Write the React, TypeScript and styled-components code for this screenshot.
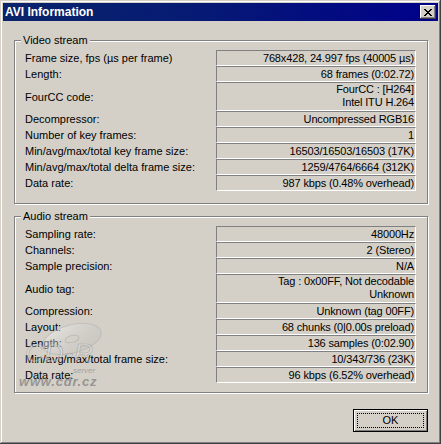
import React from "react";
import styled, { createGlobalStyle } from "styled-components";

const GlobalStyle = createGlobalStyle`
  html, body {
    margin: 0;
    padding: 0;
    background: #d4d0c8;
  }
  body {
    font-family: "Liberation Sans", Arial, sans-serif;
    font-size: 11px;
    color: #000;
  }
`;

type Row = {
  label: string;
  value: string[];
};

const videoRows: Row[] = [
  { label: "Frame size, fps (µs per frame)", value: ["768x428, 24.997 fps (40005 µs)"] },
  { label: "Length:", value: ["68 frames (0:02.72)"] },
  { label: "FourCC code:", value: ["FourCC : [H264]", "Intel ITU H.264"] },
  { label: "Decompressor:", value: ["Uncompressed RGB16"] },
  { label: "Number of key frames:", value: ["1"] },
  { label: "Min/avg/max/total key frame size:", value: ["16503/16503/16503 (17K)"] },
  { label: "Min/avg/max/total delta frame size:", value: ["1259/4764/6664 (312K)"] },
  { label: "Data rate:", value: ["987 kbps (0.48% overhead)"] },
];

const audioRows: Row[] = [
  { label: "Sampling rate:", value: ["48000Hz"] },
  { label: "Channels:", value: ["2 (Stereo)"] },
  { label: "Sample precision:", value: ["N/A"] },
  { label: "Audio tag:", value: ["Tag : 0x00FF, Not decodable", "Unknown"] },
  { label: "Compression:", value: ["Unknown (tag 00FF)"] },
  { label: "Layout:", value: ["68 chunks (0|0.00s preload)"] },
  { label: "Length:", value: ["136 samples (0:02.90)"] },
  { label: "Min/avg/max/total frame size:", value: ["10/343/736 (23K)"] },
  { label: "Data rate:", value: ["96 kbps (6.52% overhead)"] },
];

const Window = styled.div`
  width: 441px;
  height: 444px;
  box-sizing: border-box;
  padding: 3px;
  background: #d4d0c8;
  box-shadow: inset -1px -1px #404040, inset 1px 1px #d4d0c8,
    inset -2px -2px #808080, inset 2px 2px #fff;
`;

const TitleBar = styled.div`
  display: flex;
  align-items: center;
  justify-content: space-between;
  height: 18px;
  padding: 0 2px;
  background: linear-gradient(90deg, #0a246a 0%, #061a74 45%, #00008a 100%);
`;

const Title = styled.span`
  color: #fff;
  font-weight: bold;
  font-size: 12px;
  line-height: 18px;
`;

const CloseButton = styled.div`
  display: flex;
  align-items: center;
  justify-content: center;
  width: 16px;
  height: 14px;
  background: #d4d0c8;
  box-shadow: inset -1px -1px #404040, inset 1px 1px #fff,
    inset -2px -2px #808080;
`;

const Content = styled.div`
  display: flex;
  flex-direction: column;
  gap: 12px;
  padding: 19px 10px 0 11px;
`;

const GroupBox = styled.div<{ $bottom: number }>`
  position: relative;
  display: flex;
  flex-direction: column;
  padding: 9px 11px ${(p) => p.$bottom}px 10px;
  border: 1px solid #808080;
  box-shadow: inset 1px 1px #fff, 1px 1px #fff;
`;

const Legend = styled.span`
  position: absolute;
  top: -7px;
  left: 6px;
  padding: 0 2px;
  line-height: 13px;
  background: #d4d0c8;
`;

const InfoRow = styled.div`
  display: flex;
  align-items: center;
`;

const Label = styled.span`
  flex: 1;
  line-height: 14px;
  white-space: nowrap;
`;

const Value = styled.div<{ $lines: number }>`
  width: 200px;
  height: ${(p) => (p.$lines > 1 ? 29 : 16)}px;
  box-sizing: border-box;
  padding-right: 1px;
  border-top: 1px solid #808080;
  border-left: 1px solid #808080;
  border-bottom: 1px solid #fff;
  border-right: 1px solid #fff;
  text-align: right;
  line-height: ${(p) => (p.$lines > 1 ? 13 : 14)}px;
  white-space: nowrap;
  letter-spacing: -0.15px;
`;

const Footer = styled.div`
  display: flex;
  justify-content: flex-end;
  padding-top: 4px;
`;

const OkButton = styled.div`
  position: relative;
  width: 75px;
  height: 23px;
  box-sizing: border-box;
  border: 1px solid #000;
  background: #d4d0c8;
  box-shadow: inset 1px 1px #fff, inset -1px -1px #808080;
  display: flex;
  align-items: center;
  justify-content: center;
  line-height: 13px;

  &::after {
    content: "";
    position: absolute;
    inset: 3px;
    border: 1px dotted #000;
  }
`;

/* the cdr.cz watermark lies over the lower audio rows */
const Watermark = styled.div`
  position: absolute;
  left: 4px;
  top: 106px;
  display: flex;
  flex-direction: column;
  pointer-events: none;
`;

const WmSite = styled.span`
  font-size: 13px;
  font-weight: bold;
  font-style: italic;
  line-height: 13px;
  letter-spacing: 0.8px;
  color: rgba(128, 128, 128, 0.75);
`;

const CloseGlyph = () => (
  <svg width="8" height="7" viewBox="0 0 8 7" shapeRendering="crispEdges">
    <path
      d="M0 0h2v1h-2zM6 0h2v1h-2zM1 1h2v1h-2zM5 1h2v1h-2zM2 2h4v1h-4zM3 3h2v1h-2zM2 4h4v1h-4zM1 5h2v1h-2zM5 5h2v1h-2zM0 6h2v1h-2zM6 6h2v1h-2z"
      fill="#000"
    />
  </svg>
);

const CdrLogo = () => (
  <svg width="84" height="52" viewBox="0 0 84 52">
    <defs>
      <linearGradient id="cd" x1="0" y1="0" x2="1" y2="1">
        <stop offset="0" stopColor="#ffffff" stopOpacity="0.5" />
        <stop offset="0.6" stopColor="#c8c8c8" stopOpacity="0.3" />
        <stop offset="1" stopColor="#a0a0a0" stopOpacity="0.15" />
      </linearGradient>
    </defs>
    <ellipse
      cx="53"
      cy="16"
      rx="30"
      ry="14"
      transform="rotate(-15 53 16)"
      fill="url(#cd)"
      stroke="rgba(150,150,150,0.3)"
    />
    <ellipse
      cx="53"
      cy="16"
      rx="7"
      ry="3.5"
      transform="rotate(-15 53 16)"
      fill="rgba(212,208,200,0.6)"
      stroke="rgba(150,150,150,0.35)"
    />
    <text
      x="6"
      y="39"
      fontFamily="Liberation Sans, Arial, sans-serif"
      fontSize="26"
      fontStyle="italic"
      letterSpacing="1"
      fill="rgba(235,235,235,0.35)"
      stroke="rgba(120,120,120,0.45)"
      strokeWidth="0.7"
    >
      CD-R
    </text>
    <text
      x="54"
      y="50"
      fontFamily="Liberation Sans, Arial, sans-serif"
      fontSize="8"
      fontStyle="italic"
      fill="rgba(140,140,140,0.7)"
    >
      server
    </text>
  </svg>
);

const Rows = ({ rows }: { rows: Row[] }) => (
  <>
    {rows.map((r, i) => (
      <InfoRow key={i}>
        <Label>{r.label}</Label>
        <Value $lines={r.value.length}>
          {r.value.map((line, j) => (
            <div key={j}>{line}</div>
          ))}
        </Value>
      </InfoRow>
    ))}
  </>
);

const App = () => {
  return (
    <>
      <GlobalStyle />
      <Window>
        <TitleBar>
          <Title>AVI Information</Title>
          <CloseButton>
            <CloseGlyph />
          </CloseButton>
        </TitleBar>
        <Content>
          <GroupBox $bottom={12}>
            <Legend>Video stream</Legend>
            <Rows rows={videoRows} />
          </GroupBox>
          <GroupBox $bottom={9}>
            <Legend>Audio stream</Legend>
            <Rows rows={audioRows} />
            <Watermark>
              <CdrLogo />
              <WmSite>www.cdr.cz</WmSite>
            </Watermark>
          </GroupBox>
          <Footer>
            <OkButton>OK</OkButton>
          </Footer>
        </Content>
      </Window>
    </>
  );
};

export default App;
